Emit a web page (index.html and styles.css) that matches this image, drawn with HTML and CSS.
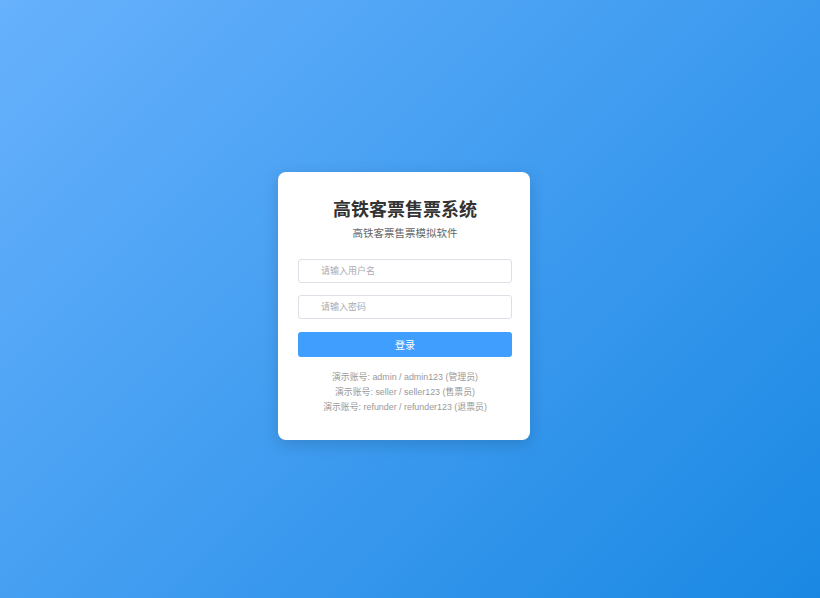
FILE: index.html
```html
<!DOCTYPE html>
<html lang="zh-CN">
<head>
<meta charset="utf-8">
<title>高铁客票售票系统</title>
<link rel="stylesheet" href="styles.css">
</head>
<body>
<div class="page">
  <div class="card">
    <h1 class="title">高铁客票售票系统</h1>
    <p class="subtitle">高铁客票售票模拟软件</p>
    <div class="field"><input class="input" type="text" placeholder="请输入用户名"></div>
    <div class="field"><input class="input" type="password" placeholder="请输入密码"></div>
    <button class="btn">登录</button>
    <div class="demo">
      <p>演示账号: admin / admin123 (管理员)</p>
      <p>演示账号: seller / seller123 (售票员)</p>
      <p>演示账号: refunder / refunder123 (退票员)</p>
    </div>
  </div>
</div>
</body>
</html>
```
FILE: styles.css
```css
html, body {
  margin: 0;
  padding: 0;
  height: 100%;
}
body {
  font-family: "Liberation Sans", Arial, "Noto Sans CJK SC", sans-serif;
  background: linear-gradient(135deg, #67b1fd 0%, #1a88e3 100%);
}
.page {
  height: 598px;
  box-sizing: border-box;
  padding: 14px 12px 0 0;
  display: flex;
  align-items: center;
  justify-content: center;
}
.card {
  width: 252px;
  height: 268px;
  box-sizing: border-box;
  background: #fff;
  border-radius: 8px;
  box-shadow: 0 4px 16px rgba(0, 0, 0, 0.15);
  padding: 26px 18px 0 20px;
  display: flex;
  flex-direction: column;
}
.title {
  margin: 0;
  text-align: center;
  font-size: 18px;
  line-height: 24px;
  font-weight: bold;
  color: #333;
}
.subtitle {
  margin: 4px 0 0;
  text-align: center;
  font-size: 10.5px;
  line-height: 14px;
  color: #666;
}
.field {
  margin-top: 12px;
}
.subtitle + .field {
  margin-top: 19px;
}
.input {
  display: block;
  width: 100%;
  height: 24px;
  box-sizing: border-box;
  border: 1px solid #dcdfe6;
  border-radius: 3px;
  padding: 0 0 0 22px;
  font-family: inherit;
  font-size: 9px;
  color: #606266;
  outline: none;
}
.input::placeholder {
  color: #a8abb2;
}
.btn {
  margin-top: 13px;
  height: 25px;
  width: 100%;
  border: none;
  border-radius: 3px;
  background: #409eff;
  color: #fff;
  font-family: inherit;
  font-size: 10px;
  cursor: pointer;
}
.demo {
  margin-top: 13px;
  text-align: center;
  font-size: 8.9px;
  line-height: 15px;
  color: #999;
}
.demo p {
  margin: 0;
}
```
